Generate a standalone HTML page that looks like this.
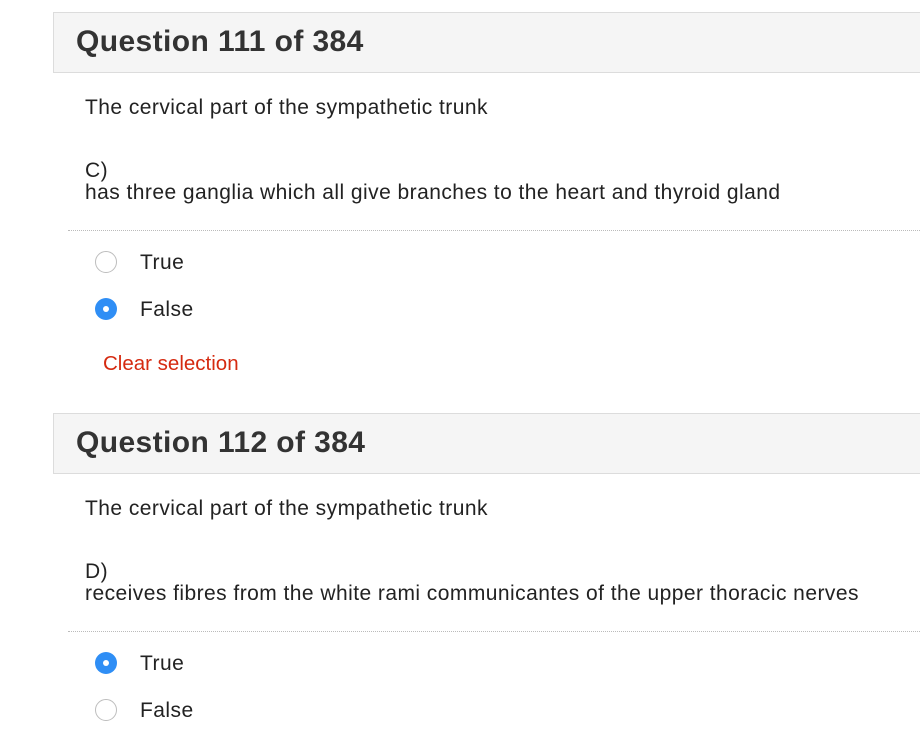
<!DOCTYPE html>
<html><head><style>
body{margin:0;width:920px;height:730px;overflow:hidden;background:#fff;font-family:"Liberation Sans",Arial,sans-serif;position:relative}
.a{position:absolute;white-space:nowrap}
.hd{position:absolute;left:53px;width:880px;height:61px;background:#f5f5f5;border:1px solid #dcdcdc;box-sizing:border-box}
.hd span{position:absolute;left:22px;top:12px;font-size:30px;font-weight:bold;color:#333;letter-spacing:0.4px}
.t{font-size:21px;color:#222;line-height:22px;letter-spacing:0.45px}
.dot{position:absolute;left:68px;width:860px;border-top:1px dotted #bbb}
.r{position:absolute;left:95px;width:22px;height:22px;border-radius:50%;box-sizing:border-box;border:1.5px solid #bdbdbd;background:#fff}
.r.on{border:none;background:#2f8ef5}
.r.on:after{content:"";position:absolute;left:8px;top:8px;width:6px;height:6px;border-radius:50%;background:#fff}
</style></head><body>
<div class="hd" style="top:12px"><span>Question 111 of 384</span></div>
<div class="a t" style="left:85px;top:97px">The cervical part of the sympathetic trunk</div>
<div class="a t" style="left:85px;top:160px">C)</div>
<div class="a t" style="left:85px;top:182px">has three ganglia which all give branches to the heart and thyroid gland</div>
<div class="dot" style="top:230px"></div>
<div class="r" style="top:251px"></div><div class="a t" style="left:140px;top:252px">True</div>
<div class="r on" style="top:298px"></div><div class="a t" style="left:140px;top:299px">False</div>
<div class="a t" style="left:103px;top:353px;color:#d52a10;font-size:20.5px;letter-spacing:0">Clear selection</div>

<div class="hd" style="top:413px"><span>Question 112 of 384</span></div>
<div class="a t" style="left:85px;top:498px">The cervical part of the sympathetic trunk</div>
<div class="a t" style="left:85px;top:561px">D)</div>
<div class="a t" style="left:85px;top:583px">receives fibres from the white rami communicantes of the upper thoracic nerves</div>
<div class="dot" style="top:631px"></div>
<div class="r on" style="top:652px"></div><div class="a t" style="left:140px;top:653px">True</div>
<div class="r" style="top:699px"></div><div class="a t" style="left:140px;top:700px">False</div>
</body></html>
